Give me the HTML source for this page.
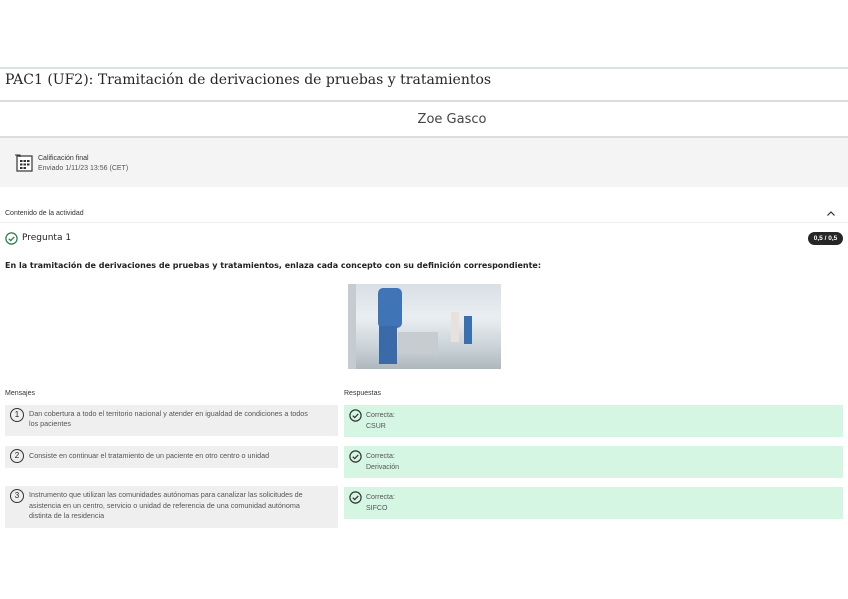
<!DOCTYPE html>
<html><head><meta charset="utf-8"><style>
*{margin:0;padding:0;box-sizing:border-box}
body{width:848px;height:599px;background:#fff;font-family:"Liberation Sans",sans-serif;color:#262626;position:relative;overflow:hidden}
.a{position:absolute}
.s{font-size:7px;color:#555}
.g{background:#efefef}
.gr{background:#d5f6e3}
.circ{width:14px;height:14px;border:1.3px solid #333;border-radius:50%;font-size:8px;text-align:center;line-height:12px;color:#222}
</style></head><body>
<div class="a" style="left:0;top:67px;width:848px;height:2px;background:#dbe3e6"></div>
<div class="a" style="left:5px;top:72px;font-family:'DejaVu Serif',serif;font-size:14px;color:#262626">PAC1 (UF2): Tramitación de derivaciones de pruebas y tratamientos</div>
<div class="a" style="left:0;top:100px;width:848px;height:2px;background:#dcdcdc"></div>
<div class="a" style="left:0;top:112px;width:848px;text-align:center;color:#444;padding-left:56px;font-family:'DejaVu Sans',sans-serif;font-size:13px">Zoe Gasco</div>
<div class="a" style="left:0;top:136px;width:848px;height:51px;background:#f4f4f4;border-top:2px solid #dcdcdc"></div>
<svg class="a" style="left:14px;top:154px" width="20" height="18" viewBox="0 0 20 18"><rect x="3" y="2" width="15" height="15" fill="#fff" stroke="#333" stroke-width="1.2"/><path d="M1 1h5v2" stroke="#333" fill="none"/><g fill="#333"><rect x="6" y="6" width="2.5" height="2"/><rect x="9.5" y="6" width="2.5" height="2"/><rect x="13" y="6" width="2.5" height="2"/><rect x="6" y="9.5" width="2.5" height="2"/><rect x="9.5" y="9.5" width="2.5" height="2"/><rect x="13" y="9.5" width="2.5" height="2"/><rect x="6" y="13" width="2.5" height="2"/><rect x="9.5" y="13" width="2.5" height="2"/></g></svg>
<div class="a s" style="left:38px;top:155px;color:#333">Calificación final</div>
<div class="a s" style="left:38px;top:165px">Enviado 1/11/23 13:56 (CET)</div>
<div class="a s" style="left:5px;top:210px;color:#333">Contenido de la actividad</div>
<svg class="a" style="left:826px;top:210px" width="10" height="7" viewBox="0 0 10 7"><path d="M1.5 5.5L5 2l3.5 3.5" fill="none" stroke="#333" stroke-width="1.2"/></svg>
<div class="a" style="left:0;top:222px;width:848px;height:1px;background:#eee"></div>
<svg class="a" style="left:5px;top:232px" width="13" height="13" viewBox="0 0 13 13"><circle cx="6.5" cy="6.5" r="5.6" fill="none" stroke="#1e7d44" stroke-width="1.2"/><path d="M3.8 6.7l1.9 1.9 3.6-3.7" fill="none" stroke="#1e7d44" stroke-width="1.2"/></svg>
<div class="a" style="left:22px;top:233px;color:#222;font-family:'DejaVu Sans',sans-serif;font-size:9px">Pregunta 1</div>
<div class="a" style="left:808px;top:232px;width:35px;height:13px;background:#262626;border-radius:7px;color:#fff;font-size:6.5px;font-weight:bold;text-align:center;line-height:13px">0,5 / 0,5</div>
<div class="a" style="left:5px;top:261px;font-weight:bold;color:#222;font-family:'DejaVu Sans',sans-serif;font-size:8px">En la tramitación de derivaciones de pruebas y tratamientos, enlaza cada concepto con su definición correspondiente:</div>
<div class="a" style="left:348px;top:284px;width:153px;height:85px;background:linear-gradient(180deg,#d8e0e6 0%,#e9eef1 40%,#c9d2d6 75%,#aeb7bb 100%);overflow:hidden">
<div class="a" style="left:30px;top:4px;width:24px;height:40px;background:#3f74b6;border-radius:5px"></div>
<div class="a" style="left:31px;top:42px;width:18px;height:38px;background:#3a6aa8"></div>
<div class="a" style="left:50px;top:48px;width:40px;height:22px;background:#c7ccd0"></div>
<div class="a" style="left:103px;top:28px;width:8px;height:30px;background:#e7e3dc"></div>
<div class="a" style="left:116px;top:32px;width:8px;height:28px;background:#3a6fb0"></div>
<div class="a" style="left:0;top:0;width:8px;height:85px;background:#c5ccd0"></div>
</div>
<div class="a s" style="left:5px;top:390px;color:#333">Mensajes</div>
<div class="a s" style="left:344px;top:390px;color:#333">Respuestas</div>
<div class="a g" style="left:5px;top:405px;width:333px;height:31px"></div>
<div class="a g" style="left:5px;top:446px;width:333px;height:22px"></div>
<div class="a g" style="left:5px;top:486px;width:333px;height:42px"></div>
<div class="a circ" style="left:10px;top:408px">1</div>
<div class="a circ" style="left:10px;top:449px">2</div>
<div class="a circ" style="left:10px;top:489px">3</div>
<div class="a s" style="left:29px;top:409px;width:310px;line-height:10px;font-size:7.2px">Dan cobertura a todo el territorio nacional y atender en igualdad de condiciones a todos<br>los pacientes</div>
<div class="a s" style="left:29px;top:451px;width:310px;line-height:10px;font-size:7.2px">Consiste en continuar el tratamiento de un paciente en otro centro o unidad</div>
<div class="a s" style="left:29px;top:490px;width:310px;line-height:10.5px;font-size:7.2px">Instrumento que utilizan las comunidades autónomas para canalizar las solicitudes de<br>asistencia en un centro, servicio o unidad de referencia de una comunidad autónoma<br>distinta de la residencia</div>
<div class="a gr" style="left:344px;top:405px;width:499px;height:32px"></div>
<div class="a gr" style="left:344px;top:446px;width:499px;height:32px"></div>
<div class="a gr" style="left:344px;top:487px;width:499px;height:32px"></div>
<svg class="a" style="left:349px;top:409px" width="13" height="13" viewBox="0 0 13 13"><circle cx="6.5" cy="6.5" r="5.6" fill="none" stroke="#333" stroke-width="1.2"/><path d="M3.8 6.7l1.9 1.9 3.6-3.7" fill="none" stroke="#333" stroke-width="1.2"/></svg>
<svg class="a" style="left:349px;top:450px" width="13" height="13" viewBox="0 0 13 13"><circle cx="6.5" cy="6.5" r="5.6" fill="none" stroke="#333" stroke-width="1.2"/><path d="M3.8 6.7l1.9 1.9 3.6-3.7" fill="none" stroke="#333" stroke-width="1.2"/></svg>
<svg class="a" style="left:349px;top:491px" width="13" height="13" viewBox="0 0 13 13"><circle cx="6.5" cy="6.5" r="5.6" fill="none" stroke="#333" stroke-width="1.2"/><path d="M3.8 6.7l1.9 1.9 3.6-3.7" fill="none" stroke="#333" stroke-width="1.2"/></svg>
<div class="a s" style="left:366px;top:410px;line-height:11px">Correcta:<br>CSUR</div>
<div class="a s" style="left:366px;top:451px;line-height:11px">Correcta:<br>Derivación</div>
<div class="a s" style="left:366px;top:492px;line-height:11px">Correcta:<br>SIFCO</div>
</body></html>
